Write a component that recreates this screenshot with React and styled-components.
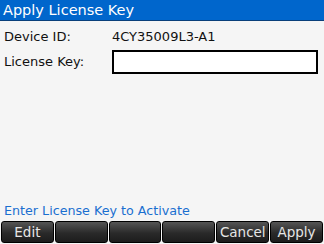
import React from "react";
import styled, { createGlobalStyle } from "styled-components";

const Global = createGlobalStyle`
  html, body {
    margin: 0;
    padding: 0;
    background: #f5f5f5;
  }
  * {
    box-sizing: border-box;
  }
`;

const Screen = styled.div`
  width: 324px;
  height: 244px;
  display: flex;
  flex-direction: column;
  background: #f5f5f5;
  font-family: "DejaVu Sans", sans-serif;
  overflow: hidden;
`;

const TitleBar = styled.div`
  height: 21px;
  background: #0066cc;
  border-bottom: 1px solid #0a3f7a;
  color: #ffffff;
  font-size: 14.5px;
  line-height: 20px;
  padding-left: 3px;
`;

const Body = styled.div`
  flex: 1;
  padding: 8px 6px 0 4px;
  display: grid;
  grid-template-columns: 108px 1fr;
  grid-auto-rows: min-content;
  row-gap: 5px;
  align-items: center;
  font-size: 13px;
  color: #111;
`;

const Label = styled.div`
  line-height: 16px;
`;

const Value = styled.div`
  line-height: 16px;
`;

const KeyInput = styled.div`
  height: 24px;
  background: #fff;
  border: 2px solid #000;
`;

const Status = styled.div`
  color: #1a6fd0;
  font-size: 12.7px;
  line-height: 16px;
  padding: 0 0 2px 4px;
`;

const SoftKeys = styled.div`
  display: grid;
  grid-template-columns: repeat(6, 1fr);
  column-gap: 1px;
  padding: 0 1px 1px 1px;
`;

const SoftKey = styled.div`
  height: 22px;
  border: 1px solid #000;
  border-radius: 3px;
  background: linear-gradient(#555555, #2a2a2a 55%, #1c1c1c);
  color: #e6e6e6;
  font-size: 13.5px;
  line-height: 20px;
  text-align: center;
`;

const keys = ["Edit", "", "", "", "Cancel", "Apply"];

export default function App() {
  return (
    <Screen>
      <Global />
      <TitleBar>Apply License Key</TitleBar>
      <Body>
        <Label>Device ID:</Label>
        <Value>4CY35009L3-A1</Value>
        <Label>License Key:</Label>
        <KeyInput />
      </Body>
      <Status>Enter License Key to Activate</Status>
      <SoftKeys>
        {keys.map((k, i) => (
          <SoftKey key={i}>{k}</SoftKey>
        ))}
      </SoftKeys>
    </Screen>
  );
}
